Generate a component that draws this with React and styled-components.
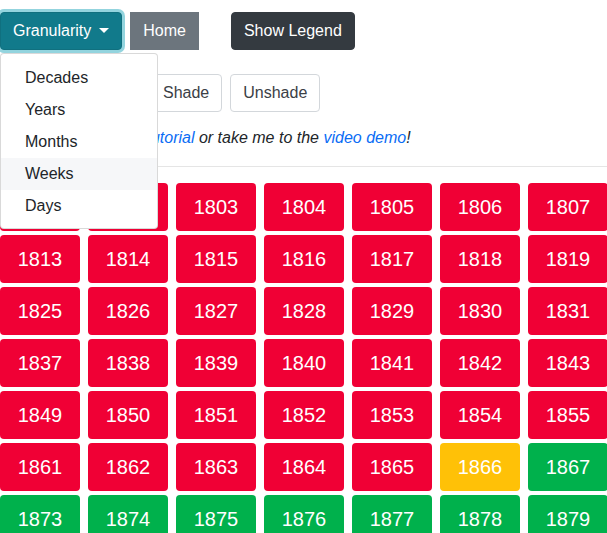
import React from 'react';
import styled, { createGlobalStyle, css } from 'styled-components';

const GlobalStyle = createGlobalStyle`
  html, body {
    margin: 0;
    overflow: hidden;
    background: #fff;
  }
  body {
    font-family: "Liberation Sans", Arial, sans-serif;
    font-size: 16px;
    line-height: 1.5;
    color: #212529;
  }
`;

const Page = styled.div`
  padding-top: 12px;
`;

const Toolbar = styled.div`
  display: flex;
  align-items: center;
  gap: 8px;
`;

const ActionRow = styled(Toolbar)`
  margin-top: 24px;
`;

const variants = {
  info: css`
    background: #117a8b;
    border-color: #10707f;
    color: #fff;
    box-shadow: 0 0 0 3px rgba(58, 176, 195, 0.55);
  `,
  secondary: css`
    background: #6c757d;
    border-color: #6c757d;
    color: #fff;
    border-radius: 0;
  `,
  dark: css`
    background: #343a40;
    border-color: #343a40;
    color: #fff;
  `,
  light: css`
    background: #fff;
    border-color: #d3d7db;
    color: #3b4046;
  `,
};

const Button = styled.button`
  font-family: inherit;
  font-size: 16px;
  line-height: 24px;
  padding: 6px 12px;
  border: 1px solid transparent;
  border-radius: 4px;
  white-space: nowrap;
  cursor: pointer;
  ${(p) => variants[p.$variant]}
  ${(p) => p.$gap && `margin-left: ${p.$gap}px;`}
  ${(p) => p.$width && `width: ${p.$width}px;`}
`;

const Caret = styled.span`
  display: inline-block;
  margin-left: 8px;
  vertical-align: 3px;
  border-top: 5px solid #fff;
  border-left: 5px solid transparent;
  border-right: 5px solid transparent;
`;

const DropdownWrap = styled.div`
  position: relative;
`;

const Menu = styled.div`
  position: absolute;
  top: 100%;
  left: 0;
  margin-top: 3px;
  width: 158px;
  box-sizing: border-box;
  padding: 8px 0 6px;
  background: #fff;
  border: 1px solid rgba(0, 0, 0, 0.15);
  border-radius: 4px;
  z-index: 1000;
`;

const MenuItem = styled.div`
  padding: 4px 24px;
  line-height: 24px;
  color: #212529;
  background: ${(p) => (p.$active ? '#f6f7f9' : 'transparent')};
`;

const Intro = styled.p`
  margin: 14px 0 0;
  font-style: italic;
  line-height: 24px;
`;

const TextLink = styled.a`
  color: #0a6cf5;
  text-decoration: none;
`;

const Rule = styled.hr`
  margin: 16px 0;
  border: 0;
  border-top: 1px solid rgba(0, 0, 0, 0.1);
`;

const YearGrid = styled.div`
  display: grid;
  grid-template-columns: repeat(12, 80px);
  column-gap: 8px;
  row-gap: 4px;
  width: max-content;
`;

const tones = {
  red: '#f00035',
  yellow: '#ffc107',
  green: '#00b14c',
};

const YearCell = styled.div`
  height: 48px;
  display: flex;
  align-items: center;
  justify-content: center;
  border-radius: 4px;
  font-size: 20px;
  color: #fff;
  background: ${(p) => tones[p.$tone]};
`;

const levels = ['Decades', 'Years', 'Months', 'Weeks', 'Days'];

const years = Array.from({ length: 84 }, (_, i) => 1801 + i);

const toneFor = (y) => (y < 1866 ? 'red' : y === 1866 ? 'yellow' : 'green');

export default function App() {
  return (
    <Page>
      <GlobalStyle />
      <Toolbar>
        <DropdownWrap>
          <Button $variant="info">
            Granularity<Caret />
          </Button>
          <Menu>
            {levels.map((l) => (
              <MenuItem key={l} $active={l === 'Weeks'}>
                {l}
              </MenuItem>
            ))}
          </Menu>
        </DropdownWrap>
        <Button $variant="secondary">Home</Button>
        <Button $variant="dark" $gap={24}>
          Show Legend
        </Button>
      </Toolbar>
      <ActionRow>
        <Button $variant="light" $width={142}>
          Clear Selection
        </Button>
        <Button $variant="light">Shade</Button>
        <Button $variant="light">Unshade</Button>
      </ActionRow>
      <Intro>
        Walk us through the <TextLink href="#">tutorial</TextLink> or take me to the{' '}
        <TextLink href="#">video demo</TextLink>!
      </Intro>
      <Rule />
      <YearGrid>
        {years.map((y) => (
          <YearCell key={y} $tone={toneFor(y)}>
            {y}
          </YearCell>
        ))}
      </YearGrid>
    </Page>
  );
}
